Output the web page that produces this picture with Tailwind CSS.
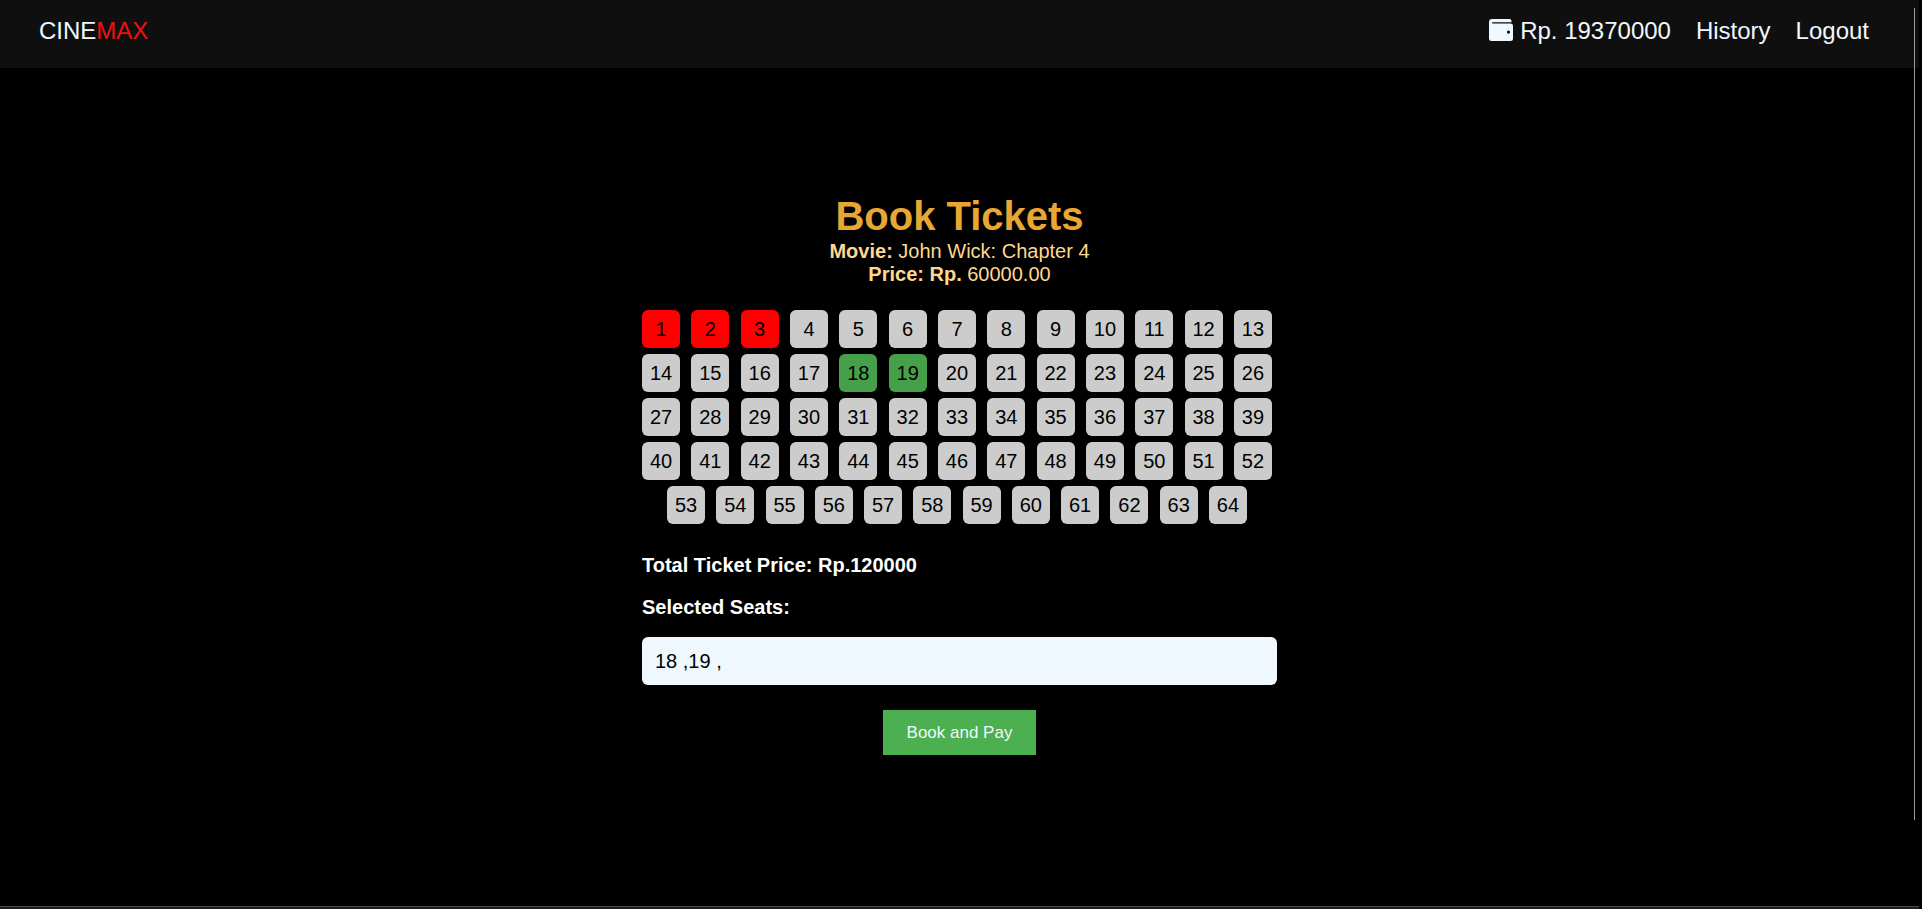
<!DOCTYPE html>
<html lang="en">
<head>
<meta charset="utf-8">
<meta name="viewport" content="width=device-width, initial-scale=1">
<title>Cinemax - Book Tickets</title>
<script src="https://cdn.jsdelivr.net/npm/@tailwindcss/browser@4"></script>
</head>
<body class="relative flex min-h-screen flex-col overflow-hidden bg-black pr-[3px] font-['Liberation_Sans',Arial,sans-serif] text-xl leading-[23px] text-white">
  <header class="flex h-[68px] items-start justify-between bg-[#0f0f0f] pt-[17px] pr-[50px] pl-[39px] text-2xl leading-7 text-[#f0f8ff]">
    <a href="#">CINE<span class="text-[#f10f0f]">MAX</span></a>
    <nav class="flex gap-[25px]">
      <a href="#" class="flex gap-[7px]">
        <svg class="mt-[2px] h-[22px] w-6" viewBox="0 0 24 22" fill="currentColor" aria-hidden="true">
          <path fill-rule="evenodd" d="M3 0H20.500Q22.500 0 22.500 2V3.200H4Q3 3.200 3 4Q3 4.600 4 4.600H21.500Q24 4.600 24 7V19.500Q24 22 21.500 22H2.500Q0 22 0 19.500V3Q0 0 3 0ZM19.500 11.500A1.600 1.600 0 1 0 19.500 14.700A1.600 1.600 0 1 0 19.500 11.500Z"/>
        </svg>
        <span>Rp. 19370000</span>
      </a>
      <a href="#">History</a>
      <a href="#">Logout</a>
    </nav>
  </header>

  <main class="mx-auto flex w-full max-w-[635px] flex-1 flex-col pt-[125px]">
    <section class="text-center text-[#ffd88f]">
      <h1 class="text-[40px] leading-[47px] font-bold text-[#e8a633]">Book Tickets</h1>
      <p><strong>Movie:</strong> John Wick: Chapter 4</p>
      <p><strong>Price: Rp.</strong> 60000.00</p>
    </section>

    <form class="flex flex-col">
      <div id="seats" class="mt-6 flex max-w-[630px] flex-col gap-[6px] text-black"></div>
      <p class="mt-[30px] font-bold">Total Ticket Price: Rp.120000</p>
      <label for="selected" class="mt-[19px] font-bold">Selected Seats:</label>
      <input id="selected" type="text" readonly value="18 ,19 ," class="mt-[18px] h-12 w-full rounded-md bg-[#f0f8ff] px-[13px] text-black">
      <button type="button" class="mt-[25px] self-center bg-[#4caf50] px-6 py-[11px] text-[17px] leading-[23px] text-[#f0f8ff]">Book and Pay</button>
    </form>
  </main>

  <div class="h-[3px] border-t border-[#484848] bg-[#1e1e1e]"></div>
  <!-- thin scrollbar thumb -->
  <div class="absolute top-2 right-[7px] bottom-[89px] w-px bg-[#9a9a9a]"></div>

  <script>
    const booked = [1, 2, 3];
    const selected = [18, 19];
    const seats = document.getElementById('seats');
    for (let start = 1; start <= 64; start += 13) {
      const row = document.createElement('div');
      row.className = start === 53 ? 'flex justify-between px-[25px]' : 'flex justify-between';
      for (let n = start; n < start + 13 && n <= 64; n++) {
        const seat = document.createElement('button');
        seat.type = 'button';
        seat.textContent = n;
        seat.disabled = booked.includes(n);
        seat.setAttribute('aria-pressed', selected.includes(n));
        seat.className = 'size-[38px] rounded-md bg-[#cccccc] disabled:bg-[#ff0000] aria-pressed:bg-[#469f49]';
        row.append(seat);
      }
      seats.append(row);
    }
  </script>
</body>
</html>
